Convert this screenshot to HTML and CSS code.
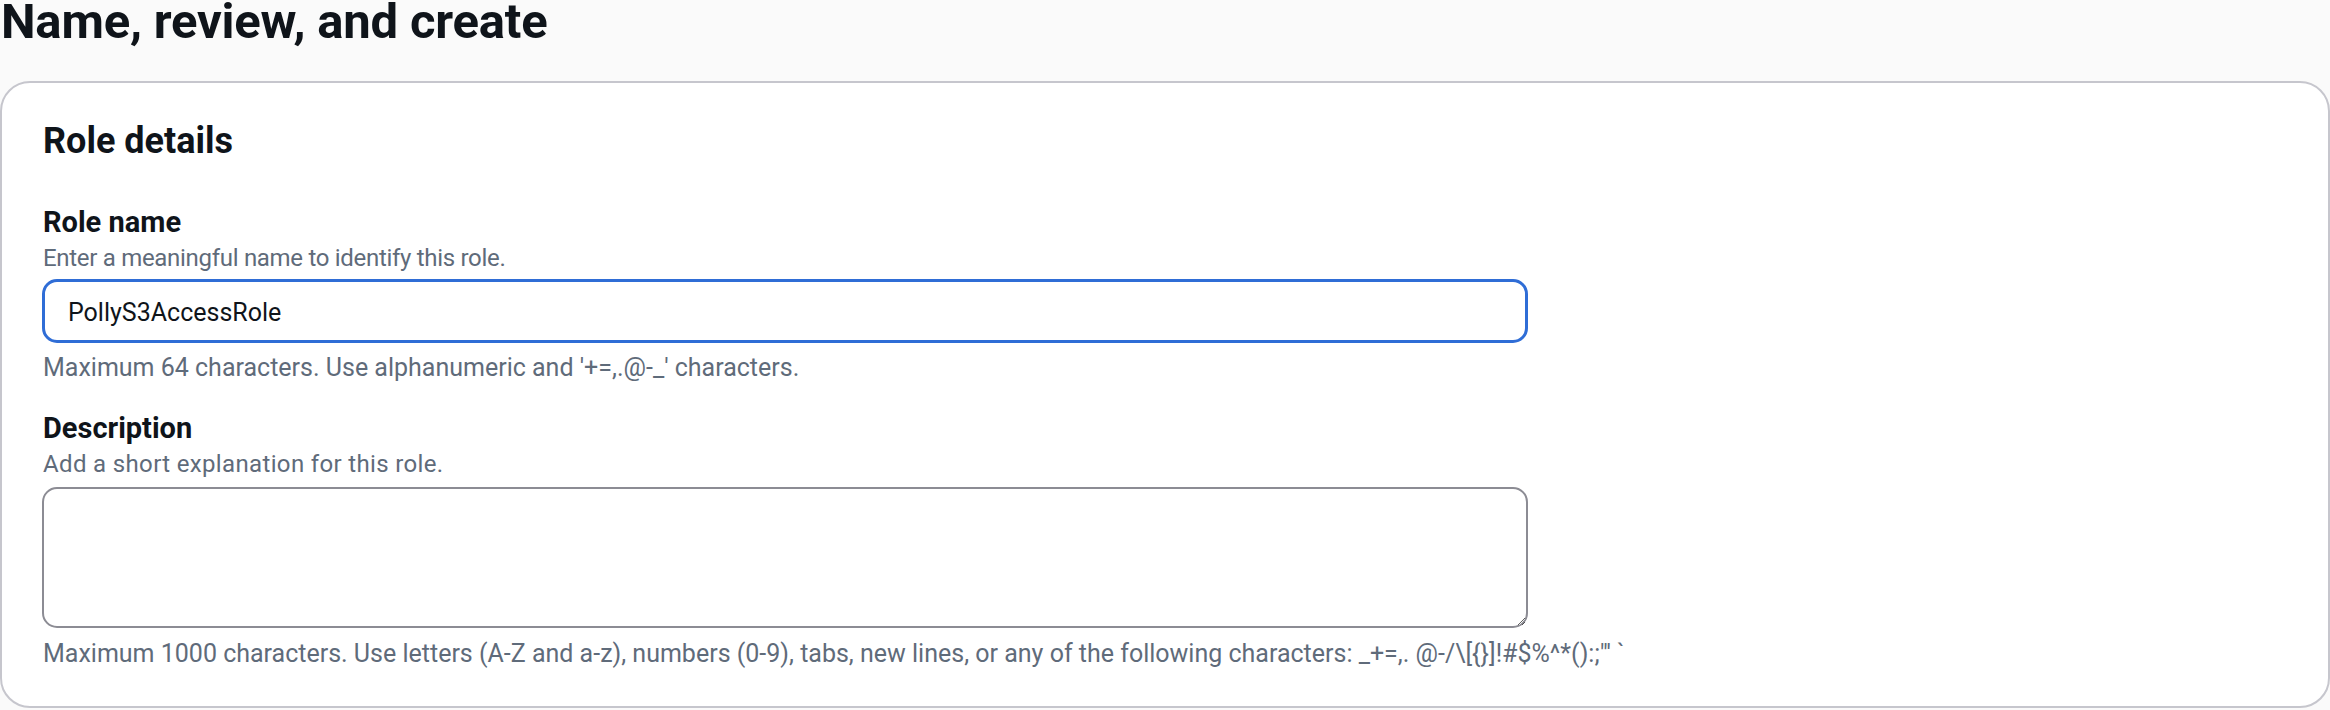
FILE: index.html
```html
<!DOCTYPE html>
<html lang="en">
<head>
<meta charset="utf-8">
<title>Name, review, and create</title>
<link rel="stylesheet" href="styles.css">
</head>
<body>
<main class="page">
  <h1 class="page-title">Name, review, and create</h1>
  <section class="card">
    <h2 class="card-title">Role details</h2>
    <div class="field field-name">
      <label class="field-label" for="role-name">Role name</label>
      <div class="field-desc desc-tight">Enter a meaningful name to identify this role.</div>
      <input class="text-input" id="role-name" type="text" value="PollyS3AccessRole">
      <div class="field-hint">Maximum 64 characters. Use alphanumeric and '+=,.@-_' characters.</div>
    </div>
    <div class="field field-desc-block">
      <label class="field-label" for="role-desc">Description</label>
      <div class="field-desc desc-loose">Add a short explanation for this role.</div>
      <textarea class="text-area" id="role-desc"></textarea>
      <div class="field-hint hint-area">Maximum 1000 characters. Use letters (A-Z and a-z), numbers (0-9), tabs, new lines, or any of the following characters: _+=,. @-/\[{}]!#$%^*():;"' `</div>
    </div>
  </section>
</main>
</body>
</html>
```
FILE: styles.css
```css
html, body {
  margin: 0;
  padding: 0;
  background: #fafafa;
}
body {
  font-family: Roboto, "Liberation Sans", sans-serif;
  color: #0f141a;
  width: 2330px;
  height: 710px;
  overflow: hidden;
}
.page {
  display: flex;
  flex-direction: column;
}
.page-title {
  margin: 0;
  font-size: 49px;
  line-height: 44px;
  font-weight: 700;
  color: #0f141a;
  padding-left: 1px;
  letter-spacing: -0.2px;
}
.card {
  margin-top: 37px;
  background: #ffffff;
  border: 2px solid #c6c6cd;
  border-radius: 30px;
  padding: 38px 41px 38px 41px;
  display: flex;
  flex-direction: column;
}
.card-title {
  margin: 0;
  font-size: 36px;
  line-height: 40px;
  font-weight: 700;
}
.field {
  display: flex;
  flex-direction: column;
}
.field-name {
  margin-top: 45px;
}
.field-desc-block {
  margin-top: 30px;
}
.field-label {
  font-size: 29px;
  line-height: 32px;
  font-weight: 700;
}
.field-desc, .field-hint {
  line-height: 28px;
  color: #5f6b7a;
}
.field-desc {
  margin-top: 6px;
  font-size: 24px;
}
.desc-tight {
  letter-spacing: -0.3px;
}
.desc-loose {
  letter-spacing: 0.35px;
}
.field-hint {
  font-size: 25px;
}
.text-input {
  margin: 7px 0 0 -1px;
  box-sizing: border-box;
  width: 1486px;
  height: 64px;
  border: 3px solid #2f6dd6;
  border-radius: 15px;
  padding: 3px 22px 0 23px;
  font-family: Roboto, "Liberation Sans", sans-serif;
  font-size: 25px;
  color: #0f141a;
  background: #ffffff;
  outline: none;
}
.field-name .field-hint {
  margin-top: 11px;
}
.text-area {
  margin: 9px 0 0 -1px;
  box-sizing: border-box;
  width: 1486px;
  height: 141px;
  border: 2px solid #8c8c94;
  border-radius: 15px;
  background: #ffffff;
  font-family: Roboto, "Liberation Sans", sans-serif;
  font-size: 24px;
  outline: none;
  resize: vertical;
}
.hint-area {
  margin-top: 12px;
}
```
